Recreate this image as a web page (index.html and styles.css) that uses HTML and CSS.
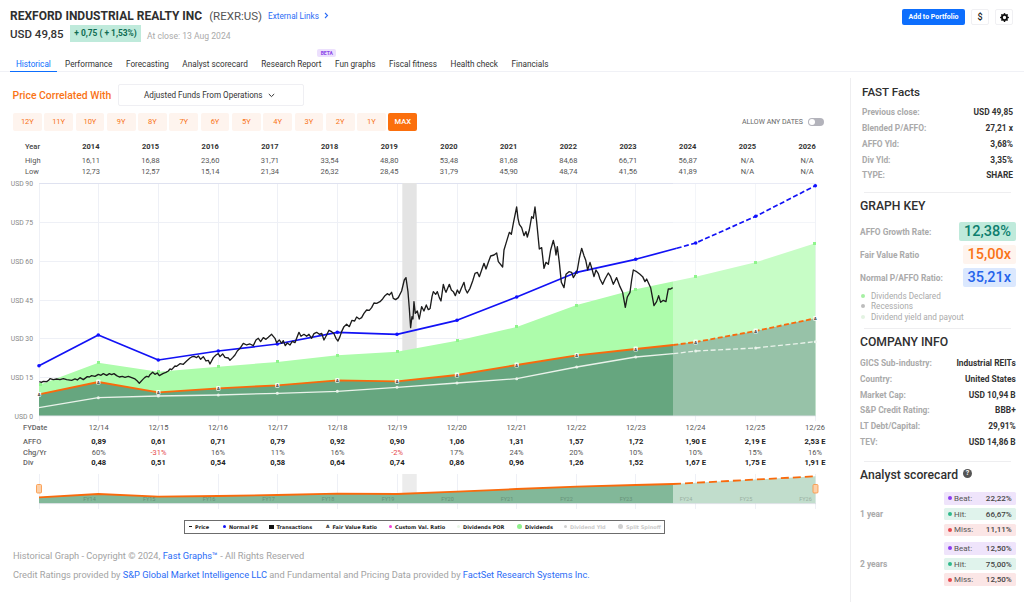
FILE: index.html
```html
<!DOCTYPE html>
<html lang="en">
<head>
    <meta charset="UTF-8">
    <meta name="viewport" content="width=device-width, initial-scale=1.0">
    <title>REXR Historical Graph</title>
    <link rel="stylesheet" href="styles.css">
</head>
<body>
    <header class="page-head">
        <div class="head-actions">
            <button class="btn-add">Add to Portfolio</button>
            <button class="btn-icon">$</button>
            <button class="btn-icon">
                <svg width="9" height="9" viewBox="0 0 16 16"><path fill="#111" d="M9.405 1.05c-.413-1.4-2.397-1.4-2.81 0l-.1.34a1.464 1.464 0 0 1-2.105.872l-.31-.17c-1.283-.698-2.686.705-1.987 1.987l.169.311c.446.82.023 1.841-.872 2.105l-.34.1c-1.4.413-1.4 2.397 0 2.81l.34.1a1.464 1.464 0 0 1 .872 2.105l-.17.31c-.698 1.283.705 2.686 1.987 1.987l.311-.169a1.464 1.464 0 0 1 2.105.872l.1.34c.413 1.4 2.397 1.4 2.81 0l.1-.34a1.464 1.464 0 0 1 2.105-.872l.31.17c1.283.698 2.686-.705 1.987-1.987l-.169-.311a1.464 1.464 0 0 1 .872-2.105l.34-.1c1.4-.413 1.4-2.397 0-2.81l-.34-.1a1.464 1.464 0 0 1-.872-2.105l.17-.31c.698-1.283-.705-2.686-1.987-1.987l-.311.169a1.464 1.464 0 0 1-2.105-.872l-.1-.34zM8 10.93a2.929 2.929 0 1 1 0-5.86 2.929 2.929 0 0 1 0 5.858z"/></svg>
            </button>
        </div>
        <div class="title-row">
            <h1>REXFORD INDUSTRIAL REALTY INC</h1>
            <span class="ticker">(REXR:US)</span>
            <a class="ext-link">External Links
                <svg width="5" height="7" viewBox="0 0 5 7"><path d="M1 1l2.5 2.5L1 6" fill="none" stroke="#2b6cf6" stroke-width="1.1"/></svg>
            </a>
        </div>
        <div class="price-row">
            <span class="price">USD 49,85</span>
            <span class="change">+ 0,75 ( + 1,53%)</span>
            <span class="close-date">At close: 13 Aug 2024</span>
        </div>
        <nav class="tabs">
            <a class="tab active">Historical</a>
            <a class="tab">Performance</a>
            <a class="tab">Forecasting</a>
            <a class="tab">Analyst scorecard</a>
            <a class="tab">Research Report<span class="beta">BETA</span></a>
            <a class="tab">Fun graphs</a>
            <a class="tab">Fiscal fitness</a>
            <a class="tab">Health check</a>
            <a class="tab">Financials</a>
        </nav>
    </header>

    <div class="layout">
        <main class="main-col">
            <div class="corr-row">
                <span class="corr-label">Price Correlated With</span>
                <div class="corr-select">Adjusted Funds From Operations
                    <svg width="7" height="5" viewBox="0 0 7 5"><path d="M.8 1l2.7 2.6L6.2 1" fill="none" stroke="#333" stroke-width="1"/></svg>
                </div>
            </div>

            <div class="range-row">
                <button class="range">12Y</button>
                <button class="range">11Y</button>
                <button class="range">10Y</button>
                <button class="range">9Y</button>
                <button class="range">8Y</button>
                <button class="range">7Y</button>
                <button class="range">6Y</button>
                <button class="range">5Y</button>
                <button class="range">4Y</button>
                <button class="range">3Y</button>
                <button class="range">2Y</button>
                <button class="range">1Y</button>
                <button class="range selected">MAX</button>
                <div class="any-dates">ALLOW ANY DATES <span class="toggle"></span></div>
            </div>

            <div class="year-table">
                <span class="lbl year-lbl">Year</span><b>2014</b><b>2015</b><b>2016</b><b>2017</b><b>2018</b><b>2019</b><b>2020</b><b>2021</b><b>2022</b><b>2023</b><b>2024</b><b>2025</b><b>2026</b>
            </div>
            <div class="year-table high">
                <span class="lbl">High</span><span>16,11</span><span>16,88</span><span>23,60</span><span>31,71</span><span>33,54</span><span>48,80</span><span>53,48</span><span>81,68</span><span>84,68</span><span>66,71</span><span>56,87</span><span>N/A</span><span>N/A</span>
            </div>
            <div class="year-table">
                <span class="lbl">Low</span><span>12,73</span><span>12,57</span><span>15,14</span><span>21,34</span><span>26,32</span><span>28,45</span><span>31,79</span><span>45,90</span><span>48,74</span><span>41,56</span><span>41,89</span><span>N/A</span><span>N/A</span>
            </div>

            <svg class="chart" width="850" height="243" viewBox="0 178 850 243">
                <defs>
                    <g id="fv">
                        <rect x="-2.2" y="-2.4" width="4.4" height="4.8" rx="1" fill="#fff" opacity=".85"/>
                        <text y="1.8" text-anchor="middle" class="fv-mark">A</text>
                    </g>
                </defs>
                <g class="axis-y">
                    <text x="33" y="186">USD 90</text>
                    <text x="33" y="225">USD 75</text>
                    <text x="33" y="264">USD 60</text>
                    <text x="33" y="303">USD 45</text>
                    <text x="33" y="341">USD 30</text>
                    <text x="33" y="380">USD 15</text>
                    <text x="33" y="419">USD 0</text>
                </g>
                <path class="grid" d="M39 222.5H816M39 261.5H816M39 300.5H816M39 338.5H816M39 377.5H816"/>
                <path class="grid" d="M98.5 183V421M158.5 183V421M218.5 183V421M277.5 183V421M337.5 183V421M397.5 183V421M457.5 183V421M516.5 183V421M576.5 183V421M635.5 183V421M695.5 183V421M755.5 183V421M815.5 183V421M39.5 183V421"/>
                <path class="grid-top" d="M39 183.5H816"/>
                <rect x="402.3" y="183" width="14.4" height="233" fill="#e4e4e4"/>

                <path fill="#adfcab" d="M39 385L98.3 362.7 158.3 371.7 218.3 366.7 277.3 362 337.3 355.3 397 351.7 457 340.7 516.7 327 576.7 305 635.7 289.3 695.7 276.7 755.7 262.3 815.3 243.3V416H39Z"/>
                <path fill="#66a67f" d="M39 394.3L98.3 382 158.3 392.3 218.3 388.3 277.3 385.3 337.3 380.3 397 381.3 457 375 516.7 365 576.7 355.3 635.7 349 695.7 342 755.7 331 815.3 318.3V416H39Z"/>
                <rect x="673" y="183" width="142.5" height="233" fill="#fff" opacity=".32"/>
                <path class="grid-base" d="M39 415.8H816"/>

                <g class="green-pts">
                    <rect x="39" y="383" width="3" height="3"/><rect x="97" y="361" width="3" height="3"/><rect x="157" y="370" width="3" height="3"/><rect x="217" y="365" width="3" height="3"/><rect x="276" y="360" width="3" height="3"/><rect x="336" y="354" width="3" height="3"/><rect x="396" y="350" width="3" height="3"/><rect x="456" y="339" width="3" height="3"/><rect x="515" y="325" width="3" height="3"/><rect x="575" y="304" width="3" height="3"/><rect x="634" y="288" width="3" height="3"/><rect x="694" y="275" width="3" height="3"/><rect x="754" y="261" width="3" height="3"/><rect x="813" y="242" width="3" height="3"/>
                </g>

                <polyline class="ln-white" points="39,407.7 98.3,397.7 158.3,396 218.3,395 277.3,393.3 337.3,391.3 397,387.3 457,383 516.7,378.7 576.7,367 635.7,357 673.3,353.7"/>
                <polyline class="ln-white dash" points="673.3,353.7 695.7,351 755.7,348 815.3,341.7"/>
                <g fill="#e9f2ea">
                    <circle cx="98.3" cy="397.7" r="1.5"/><circle cx="158.3" cy="396" r="1.5"/><circle cx="218.3" cy="395" r="1.5"/><circle cx="277.3" cy="393.3" r="1.5"/><circle cx="337.3" cy="391.3" r="1.5"/><circle cx="397" cy="387.3" r="1.5"/><circle cx="457" cy="383" r="1.5"/><circle cx="516.7" cy="378.7" r="1.5"/><circle cx="576.7" cy="367" r="1.5"/><circle cx="635.7" cy="357" r="1.5"/><circle cx="695.7" cy="351" r="1.5"/><circle cx="755.7" cy="348" r="1.5"/><circle cx="815.3" cy="341.7" r="1.5"/>
                </g>

                <polyline class="ln-orange" points="39,394.3 98.3,382 158.3,392.3 218.3,388.3 277.3,385.3 337.3,380.3 397,381.3 457,375 516.7,365 576.7,355.3 635.7,349 673.3,345"/>
                <polyline class="ln-orange dash" points="673.3,345 695.7,342 755.7,331 815.3,318.3"/>
                <use href="#fv" x="39" y="394.3"/><use href="#fv" x="98.3" y="382"/><use href="#fv" x="158.3" y="392.3"/><use href="#fv" x="218.3" y="388.3"/><use href="#fv" x="277.3" y="385.3"/><use href="#fv" x="337.3" y="380.3"/><use href="#fv" x="397" y="381.3"/><use href="#fv" x="457" y="375"/><use href="#fv" x="516.7" y="365"/><use href="#fv" x="576.7" y="355.3"/><use href="#fv" x="635.7" y="349"/><use href="#fv" x="695.7" y="342"/><use href="#fv" x="755.7" y="331"/><use href="#fv" x="815.3" y="318.3"/>

                <polyline class="ln-blue" points="39,365.7 98.3,335 158.3,360 218.3,351 277.3,344 337.3,332.3 397,334.3 457,320.3 516.7,297 576.7,272.3 635.7,259.3 676.7,248.3"/>
                <polyline class="ln-blue dash" points="676.7,248.3 695.7,243 755.7,216.3 815.3,185.7"/>
                <g fill="#1010ff">
                    <circle cx="39" cy="365.7" r="1.8"/><circle cx="98.3" cy="335" r="1.8"/><circle cx="158.3" cy="360" r="1.8"/><circle cx="218.3" cy="351" r="1.8"/><circle cx="277.3" cy="344" r="1.8"/><circle cx="337.3" cy="332.3" r="1.8"/><circle cx="397" cy="334.3" r="1.8"/><circle cx="457" cy="320.3" r="1.8"/><circle cx="516.7" cy="297" r="1.8"/><circle cx="576.7" cy="272.3" r="1.8"/><circle cx="635.7" cy="259.3" r="1.8"/><circle cx="695.7" cy="243" r="1.8"/><circle cx="755.7" cy="216.3" r="1.8"/><circle cx="815.3" cy="185.7" r="1.8"/>
                </g>

                <!-- price line, points read off the chart in two halves -->
                <g transform="translate(0 175) scale(.3333)">
                    <polyline class="ln-price" points="118,620 124,622 130,619 140,620 146,616 150,611 160,614 170,612 180,614 190,611 200,614 215,616 225,612 232,615 240,608 250,614 262,605 268,606 275,602 285,604 295,598 303,601 310,596 320,601 328,596 335,599 342,596 350,602 358,606 367,604 375,607 385,604 395,608 405,612 412,618 418,625 428,614 434,608 440,604 446,606 450,599 458,592 465,598 472,594 478,602 490,595 498,592 505,588 510,582 515,584 525,573 530,574 540,566 550,568 560,558 570,549 575,546 582,544 590,548 595,543 602,553 610,545 618,558 625,556 630,567 640,548 648,540 655,536 660,545 668,537 675,547 685,549 690,556 698,548 705,540 712,528 720,520 730,505 740,510 750,507 760,512 768,495 775,490 782,500 790,488 798,493 805,487 815,478 820,484 825,490 830,503 838,495 845,505 850,497 856,512 862,504 870,510 877,499 885,503 890,490 897,472 903,484 912,478 920,484 927,478 935,490 942,476 950,472 958,478 965,475 972,495 980,480 987,466 995,470 1002,476 1008,490 1014,498 1020,485 1025,470 1032,455 1040,448 1048,455 1056,436 1064,438 1070,426 1078,432 1085,428 1092,415 1100,405 1108,406 1115,398 1122,384 1130,385 1140,380 1148,372 1155,362 1162,356 1168,360 1175,352 1180,370 1187,374 1195,368 1205,348 1213,315 1218,308 1224,350 1228,400 1232,458 1236,425 1239,432 1242,380 1246,415 1252,408 1258,432 1265,395 1272,408 1279,390 1285,404 1290,402"/>
                </g>
                <g transform="translate(420 175) scale(.3333)">
                    <polyline class="ln-price" points="30,402 36,365 40,350 47,358 52,350 58,368 63,378 70,328 75,345 78,352 88,328 94,345 100,350 106,362 112,345 118,355 124,340 132,322 136,342 142,354 150,340 158,318 165,295 172,292 178,305 185,285 192,265 198,282 205,262 212,243 222,240 230,234 235,260 248,276 252,225 258,205 268,172 274,178 280,145 290,96 294,130 298,148 305,158 312,182 318,170 322,186 328,165 335,125 340,130 345,96 350,140 358,222 365,218 372,280 378,262 385,268 392,225 400,196 405,218 408,240 412,215 418,262 424,322 432,338 438,298 447,290 455,292 460,308 466,298 472,285 478,250 485,220 492,242 497,255 503,285 510,262 516,282 522,305 528,285 535,296 540,312 548,328 555,312 565,294 572,305 580,328 590,308 600,335 608,352 616,397 622,366 630,352 635,315 640,285 650,290 660,298 668,305 675,320 680,312 692,338 702,392 710,380 716,362 722,382 730,376 738,380 745,342 752,342 758,338"/>
                </g>
            </svg>

            <div class="fy-table fy-dates">
                <span class="lbl">FYDate</span><span>12/14</span><span>12/15</span><span>12/16</span><span>12/17</span><span>12/18</span><span>12/19</span><span>12/20</span><span>12/21</span><span>12/22</span><span>12/23</span><span>12/24</span><span>12/25</span><span>12/26</span>
            </div>
            <div class="fy-table fy-affo">
                <span class="lbl">AFFO</span><b>0,89</b><b>0,61</b><b>0,71</b><b>0,79</b><b>0,92</b><b>0,90</b><b>1,06</b><b>1,31</b><b>1,57</b><b>1,72</b><b>1,90 E</b><b>2,19 E</b><b>2,53 E</b>
            </div>
            <div class="fy-table">
                <span class="lbl">Chg/Yr</span><span>60%</span><span class="neg">-31%</span><span>16%</span><span>11%</span><span>16%</span><span class="neg">-2%</span><span>17%</span><span>24%</span><span>20%</span><span>10%</span><span>10%</span><span>15%</span><span>16%</span>
            </div>
            <div class="fy-table">
                <span class="lbl">Div</span><b>0,48</b><b>0,51</b><b>0,54</b><b>0,58</b><b>0,64</b><b>0,74</b><b>0,86</b><b>0,96</b><b>1,26</b><b>1,52</b><b>1,67 E</b><b>1,75 E</b><b>1,91 E</b>
            </div>

            <svg class="mini" width="850" height="38" viewBox="0 473 850 38">
                <path class="grid" d="M39.5 474V509M98.5 474V509M158.5 474V509M218.5 474V509M277.5 474V509M337.5 474V509M397.5 474V509M457.5 474V509M516.5 474V509M576.5 474V509M635.5 474V509M695.5 474V509M755.5 474V509M815.5 474V509"/>
                <rect x="402.3" y="474" width="14.4" height="29" fill="#ececec"/>
                <path fill="#82b899" d="M39 497.3L98.3 494 158.3 496.7 218.3 496 277.3 495 337.3 493.7 397 494 457 491.7 516.7 489 576.7 486.7 635.7 485 673 484V503.3H39Z"/>
                <path fill="#c1ddcc" d="M673 484L815.5 476.3V503.3H673Z"/>
                <path class="grid-base" d="M39 503.6H816"/>
                <polyline class="ln-orange" points="39,497.3 98.3,494 158.3,496.7 218.3,496 277.3,495 337.3,493.7 397,494 457,491.7 516.7,489 576.7,486.7 635.7,485 673,484"/>
                <polyline class="ln-orange mini-dash" points="673,484 815.5,476.3"/>
                <g class="fy-mark">
                    <text x="89.5" y="501">FY14</text><text x="149.2" y="501">FY15</text><text x="209" y="501">FY16</text><text x="268.5" y="501">FY17</text><text x="328" y="501">FY18</text><text x="388" y="501">FY19</text><text x="447.5" y="501">FY20</text><text x="507" y="501">FY21</text><text x="566.5" y="501">FY22</text><text x="626" y="501">FY23</text><text x="686" y="501">FY24</text><text x="746" y="501">FY25</text><text x="805.5" y="501">FY26</text>
                </g>
                <rect class="handle" x="36.5" y="484.5" width="5" height="8.5" rx="1"/>
                <rect class="handle" x="813" y="484.5" width="5" height="8.5" rx="1"/>
            </svg>

            <div class="legend">
                <span class="key k-price"><i class="m-dash"></i>Price</span>
                <span class="key k-normal"><i class="m-dot blue"></i>Normal PE</span>
                <span class="key k-trans"><i class="m-sq"></i>Transactions</span>
                <span class="key k-fair"><i class="m-tri">A</i>Fair Value Ratio</span>
                <span class="key k-custom"><i class="m-dot pink"></i>Custom Val. Ratio</span>
                <span class="key k-por"><i class="m-dot pale"></i>Dividends POR</span>
                <span class="key k-div"><i class="m-dot green"></i>Dividends</span>
                <span class="key k-yld off"><i class="m-dot grey"></i>Dividend Yld</span>
                <span class="key off"><i class="m-dot grey big"></i>Split Spinoff</span>
            </div>

            <footer class="credits">
                <p>Historical Graph - Copyright © 2024, <a>Fast Graphs™</a> - All Rights Reserved</p>
                <p>Credit Ratings provided by <a>S&amp;P Global Market Intelligence LLC</a> and Fundamental and Pricing Data provided by <a>FactSet Research Systems Inc.</a></p>
            </footer>
        </main>

        <aside class="side">
            <section class="facts">
                <h2 class="fast-title">FAST Facts</h2>
                <div class="row"><span>Previous close:</span><b>USD 49,85</b></div>
                <div class="row"><span>Blended P/AFFO:</span><b>27,21 x</b></div>
                <div class="row"><span>AFFO Yld:</span><b>3,68%</b></div>
                <div class="row"><span>Div Yld:</span><b>3,35%</b></div>
                <div class="row"><span>TYPE:</span><b>SHARE</b></div>
            </section>
            <hr class="sep sep-key">

            <h2>GRAPH KEY</h2>
            <div class="key-rows">
                <div class="key-row"><span>AFFO Growth Rate:</span><b class="pill teal">12,38%</b></div>
                <div class="key-row"><span>Fair Value Ratio</span><b class="pill orange">15,00x</b></div>
                <div class="key-row"><span>Normal P/AFFO Ratio:</span><b class="pill blue">35,21x</b></div>
            </div>
            <ul class="notes">
                <li><i class="note-dot d-green"></i>Dividends Declared</li>
                <li><i class="note-dot d-grey"></i>Recessions</li>
                <li><i class="note-dot d-pale"></i>Dividend yield and payout</li>
            </ul>
            <hr class="sep sep-company">

            <h2>COMPANY INFO</h2>
            <div class="company">
                <div class="row"><span>GICS Sub-industry:</span><b>Industrial REITs</b></div>
                <div class="row"><span>Country:</span><b>United States</b></div>
                <div class="row"><span>Market Cap:</span><b>USD 10,94 B</b></div>
                <div class="row"><span>S&amp;P Credit Rating:</span><b>BBB+</b></div>
                <div class="row"><span>LT Debt/Capital:</span><b>29,91%</b></div>
                <div class="row"><span>TEV:</span><b>USD 14,86 B</b></div>
            </div>
            <hr class="sep sep-analyst">

            <h2 class="analyst-title">Analyst scorecard <span class="help">?</span></h2>
            <div class="score-group">
                <span class="score-label">1 year</span>
                <div class="chips">
                    <div class="chip c-beat"><span><i></i>Beat:</span><b>22,22%</b></div>
                    <div class="chip c-hit"><span><i></i>Hit:</span><b>66,67%</b></div>
                    <div class="chip c-miss"><span><i></i>Miss:</span><b>11,11%</b></div>
                </div>
            </div>
            <div class="score-group">
                <span class="score-label">2 years</span>
                <div class="chips">
                    <div class="chip c-beat"><span><i></i>Beat:</span><b>12,50%</b></div>
                    <div class="chip c-hit"><span><i></i>Hit:</span><b>75,00%</b></div>
                    <div class="chip c-miss"><span><i></i>Miss:</span><b>12,50%</b></div>
                </div>
            </div>
        </aside>
    </div>
</body>
</html>
```

FILE: styles.css
```css
* {
    box-sizing: border-box;
}

body {
    margin: 0;
    width: 1024px;
    height: 602px;
    overflow: hidden;
    background: #fff;
    color: #333;
    font-family: Roboto, "Liberation Sans", sans-serif;
}

/* header */
.page-head {
    position: relative;
    height: 72px;
    border-bottom: 1px solid #f0f1f6;
    padding: 8px 0 0 10px;
}

.head-actions {
    position: absolute;
    top: 9px;
    right: 11px;
    display: flex;
    gap: 6px;
}

.btn-add {
    width: 63px;
    height: 16px;
    padding: 0;
    border: none;
    border-radius: 2px;
    background: #0d6efd;
    color: #fff;
    font: 700 7px Roboto, sans-serif;
}

.btn-icon {
    width: 18px;
    height: 16px;
    padding: 0;
    border: 1px solid #f0f0f3;
    border-radius: 2px;
    background: #fff;
    color: #222;
    font: 500 9px Roboto, sans-serif;
    display: flex;
    align-items: center;
    justify-content: center;
}

.title-row {
    display: flex;
    align-items: center;
    height: 15px;
}

h1 {
    margin: 0;
    font-size: 12px;
    font-weight: 700;
    color: #2f2f2f;
}

.ticker {
    margin-left: 7px;
    font-size: 11.5px;
    color: #555;
}

.ext-link {
    margin-left: 6px;
    font-size: 8.2px;
    color: #2b6cf6;
    display: flex;
    align-items: center;
    gap: 5px;
}

.price-row {
    display: flex;
    align-items: center;
    height: 17px;
    margin-top: 2px;
}

.price {
    width: 60px;
    font-size: 11.5px;
    font-weight: 500;
    color: #333;
}

.change {
    width: 71px;
    height: 17px;
    line-height: 16px;
    text-align: center;
    background: #bfeadb;
    color: #0f6b52;
    font-size: 8.4px;
    font-weight: 700;
}

.close-date {
    margin-left: 6px;
    margin-top: 4px;
    font-size: 8.6px;
    color: #aaa;
}

.tabs {
    display: flex;
    margin: 14px 0 0 0;
    gap: 0;
}

.tab {
    position: relative;
    height: 16px;
    line-height: 16px;
    padding: 0 6.75px;
    font-size: 8.2px;
    color: #333;
    white-space: nowrap;
}

.tab.active {
    padding: 0 6px;
    margin-right: 1.5px;
    color: #0d6efd;
    border-bottom: 1.5px solid #0d6efd;
}

.beta {
    position: absolute;
    top: -7px;
    right: -8px;
    width: 19px;
    height: 8px;
    line-height: 8px;
    border-radius: 2px;
    background: #ece0fd;
    color: #8b45e8;
    font-size: 5px;
    font-weight: 700;
    text-align: center;
}

.layout {
    display: flex;
}

/* main column */
.main-col {
    width: 850px;
    flex: none;
}

.corr-row {
    display: flex;
    align-items: center;
    height: 22px;
    margin-top: 12px;
    padding-left: 12.5px;
}

.corr-label {
    width: 105.5px;
    font-size: 10.4px;
    font-weight: 500;
    color: #f97316;
}

.corr-select {
    width: 185.5px;
    height: 22px;
    border: 1px solid #efeff3;
    border-radius: 2px;
    padding-left: 25px;
    display: flex;
    align-items: center;
    gap: 6px;
    font-size: 8.15px;
    color: #333;
}

.range-row {
    display: flex;
    align-items: center;
    gap: 2.6px;
    height: 18px;
    margin-top: 6.5px;
    padding: 0 26px 0 13px;
}

.range {
    width: 28.7px;
    height: 18px;
    padding: 0;
    border: none;
    border-radius: 2px;
    background: #fef4ee;
    color: #f97316;
    font: 400 7.5px Roboto, sans-serif;
}

.range.selected {
    background: #fb6f0d;
    color: #fff;
    font-weight: 500;
}

.any-dates {
    margin-left: auto;
    display: flex;
    align-items: center;
    gap: 5px;
    font-size: 7px;
    color: #666;
}

.toggle {
    position: relative;
    width: 16px;
    height: 8px;
    border-radius: 4px;
    background: #b3b3bb;
}

.toggle::after {
    content: "";
    position: absolute;
    top: 1px;
    left: 1px;
    width: 6px;
    height: 6px;
    border-radius: 50%;
    background: #fff;
}

.year-table,
.fy-table {
    display: grid;
    height: 10.5px;
    line-height: 10.5px;
    font-size: 7.5px;
    color: #555;
    text-align: center;
    white-space: nowrap;
}

.year-table {
    grid-template-columns: 36px repeat(13, 59.7px);
    padding-left: 25px;
}

.year-table:nth-child(3) {
    margin-top: 11px;
}

.year-table b {
    color: #333;
}

.year-table.high {
    margin-top: 4px;
}

.lbl {
    text-align: left;
}

.year-lbl {
    font-weight: 500;
    color: #444;
}

.chart {
    display: block;
    margin-top: 1px;
}

.axis-y text {
    font-size: 6.8px;
    fill: #888;
    text-anchor: end;
}

.grid {
    stroke: #eef0f6;
    stroke-width: 1;
    fill: none;
}

.grid-top {
    stroke: #dfe2f0;
    stroke-width: 1;
    fill: none;
}

.grid-base {
    stroke: #d5dbe0;
    stroke-width: .8;
    fill: none;
}

.green-pts rect {
    fill: #8ef58b;
}

.fv-mark {
    font-size: 4px;
    font-weight: 700;
    fill: #222;
}

polyline {
    fill: none;
    stroke-linejoin: round;
}

.ln-blue {
    stroke: #1212f5;
    stroke-width: 1.7;
}

.ln-orange {
    stroke: #f96a0c;
    stroke-width: 1.8;
}

.ln-white {
    stroke: #e9f2ea;
    stroke-width: 1.3;
}

.dash {
    stroke-dasharray: 5 2.5;
}

.mini-dash {
    stroke-dasharray: 8 4;
}

.ln-price {
    stroke: #1c1c1c;
    stroke-width: 4;
}

.fy-mark text {
    font-size: 5.5px;
    fill: #000;
    opacity: .22;
    text-anchor: middle;
}

.handle {
    fill: #fcd0a8;
    stroke: #fb923c;
    stroke-width: .8;
}

.fy-table {
    grid-template-columns: 45.85px repeat(13, 59.7px);
    padding-left: 23px;
}

.fy-dates {
    margin-top: 2px;
}

.fy-affo {
    margin-top: 3.8px;
}

.fy-table b {
    color: #222;
    font-size: 7.6px;
}

.fy-table .lbl {
    color: #666;
    font-weight: 500;
}

.neg {
    color: #e5484d;
}

.mini {
    display: block;
    margin-top: 3.8px;
}

.legend {
    display: flex;
    align-items: center;
    width: 481px;
    height: 14px;
    margin: 9.3px 0 0 184px;
    padding-left: 4px;
    border: 1.5px solid #6c6c6c;
    font-family: "DejaVu Sans", sans-serif;
    font-size: 5px;
    font-weight: 700;
    color: #222;
    white-space: nowrap;
}

.key {
    display: flex;
    align-items: center;
    gap: 3px;
    flex: none;
}

.k-price { width: 34px; }
.k-normal { width: 46px; }
.k-trans { width: 57px; }
.k-fair { width: 63px; }
.k-custom { width: 68px; }
.k-por { width: 60px; }
.k-div { width: 47px; }
.k-yld { width: 54px; }

.key.off {
    color: #c9c9c9;
}

.m-dash {
    width: 3px;
    height: 1px;
    background: #111;
}

.m-dot {
    width: 3px;
    height: 3px;
    border-radius: 50%;
}

.m-dot.blue { background: #1212f5; }
.m-dot.pink { background: #f43fd8; }
.m-dot.pale { background: #e8f7e6; }
.m-dot.green { width: 5px; height: 5px; background: #90f08c; }
.m-dot.grey { background: #d0d0d0; }
.m-dot.big { width: 5px; height: 5px; }

.m-sq {
    width: 4.5px;
    height: 4.5px;
    background: #111;
}

.m-tri {
    font-style: normal;
    font-size: 4.5px;
}

.credits {
    margin: 15px 0 0 13px;
    font-size: 9.25px;
    color: #a3a3a3;
}

.credits p {
    margin: 0 0 4.7px;
    line-height: 14px;
}

.credits a {
    color: #2b6cf6;
}

/* sidebar */
.side {
    width: 174px;
    height: 524px;
    margin-top: 6px;
    border-left: 1px solid #eeeef0;
    padding: 5.7px 8.3px 0 9px;
}

h2 {
    margin: 0;
    height: 16px;
    line-height: 16px;
    font-size: 12.2px;
    font-weight: 500;
    color: #2f2f2f;
}

.facts {
    padding: 0 2.7px 0 2px;
}

.fast-title {
    font-size: 11.6px;
    margin-bottom: 5.7px;
}

.row {
    display: flex;
    justify-content: space-between;
    height: 15.75px;
    line-height: 15.75px;
    font-size: 8.4px;
    white-space: nowrap;
}

.row span {
    color: #aaa;
    font-weight: 700;
}

.row b {
    color: #333;
}

.sep {
    height: 1px;
    margin-left: 4px;
    margin-right: 5px;
    border: none;
    background: #eeeef0;
}

.sep-key {
    margin-top: 7.5px;
    margin-bottom: 5.3px;
}

.key-rows {
    display: flex;
    flex-direction: column;
    gap: 4.2px;
    margin-top: 8.2px;
}

.key-row {
    display: flex;
    justify-content: space-between;
    align-items: center;
    height: 19px;
    font-size: 8.4px;
    font-weight: 700;
    color: #aaa;
}

.pill {
    width: 53px;
    height: 19px;
    line-height: 19px;
    text-align: center;
    border-radius: 2px;
    font-size: 14.5px;
    font-weight: 500;
}

.pill.teal {
    width: 56.5px;
    background: #bfeadb;
    color: #0d7f6e;
}

.pill.orange {
    background: #fef4ee;
    color: #f97316;
}

.pill.blue {
    background: #dbe8fe;
    color: #2563eb;
}

.notes {
    list-style: none;
    margin: 3.7px 0 0;
    padding: 0 0 0 1px;
    font-size: 8.2px;
    color: #aaa;
}

.notes li {
    display: flex;
    align-items: center;
    height: 10.2px;
}

.note-dot {
    width: 4px;
    height: 4px;
    margin-right: 6px;
    border-radius: 50%;
}

.d-green { background: #a6f0a3; }
.d-grey { background: #bdbdbd; }
.d-pale { background: #e3f3e2; }

.sep-company {
    margin-top: 6.7px;
    margin-bottom: 5px;
}

.company {
    margin-top: 5.8px;
}

.sep-analyst {
    margin-top: 10px;
    margin-bottom: 5.5px;
}

.analyst-title {
    display: flex;
    align-items: center;
    gap: 2px;
}

.help {
    width: 9px;
    height: 9px;
    margin: -3px 0 0 3px;
    border-radius: 50%;
    background: #555;
    color: #fff;
    font-size: 7px;
    font-weight: 700;
    line-height: 9px;
    text-align: center;
}

.score-group {
    display: flex;
    align-items: center;
    justify-content: space-between;
    margin-bottom: 6px;
}

.analyst-title + .score-group {
    margin-top: 9px;
}

.score-label {
    font-size: 8.4px;
    font-weight: 700;
    color: #aaa;
}

.chips {
    display: flex;
    flex-direction: column;
    gap: 3.2px;
    width: 71.7px;
}

.chip {
    display: flex;
    justify-content: space-between;
    align-items: center;
    height: 12.5px;
    padding: 0 4px 0 3.5px;
    border-radius: 1.5px;
    font-size: 8px;
    color: #555;
}

.chip span {
    display: flex;
    align-items: center;
    gap: 2.5px;
}

.chip b {
    font-weight: 500;
    color: #444;
}

.chip i {
    width: 4px;
    height: 4px;
    border-radius: 50%;
}

.c-beat { background: #efe4fb; }
.c-beat i { background: #8b3cf0; }
.c-hit { background: #e0f3ec; }
.c-hit i { background: #2fb98c; }
.c-miss { background: #fbe6e6; }
.c-miss i { background: #e5484d; }
```
